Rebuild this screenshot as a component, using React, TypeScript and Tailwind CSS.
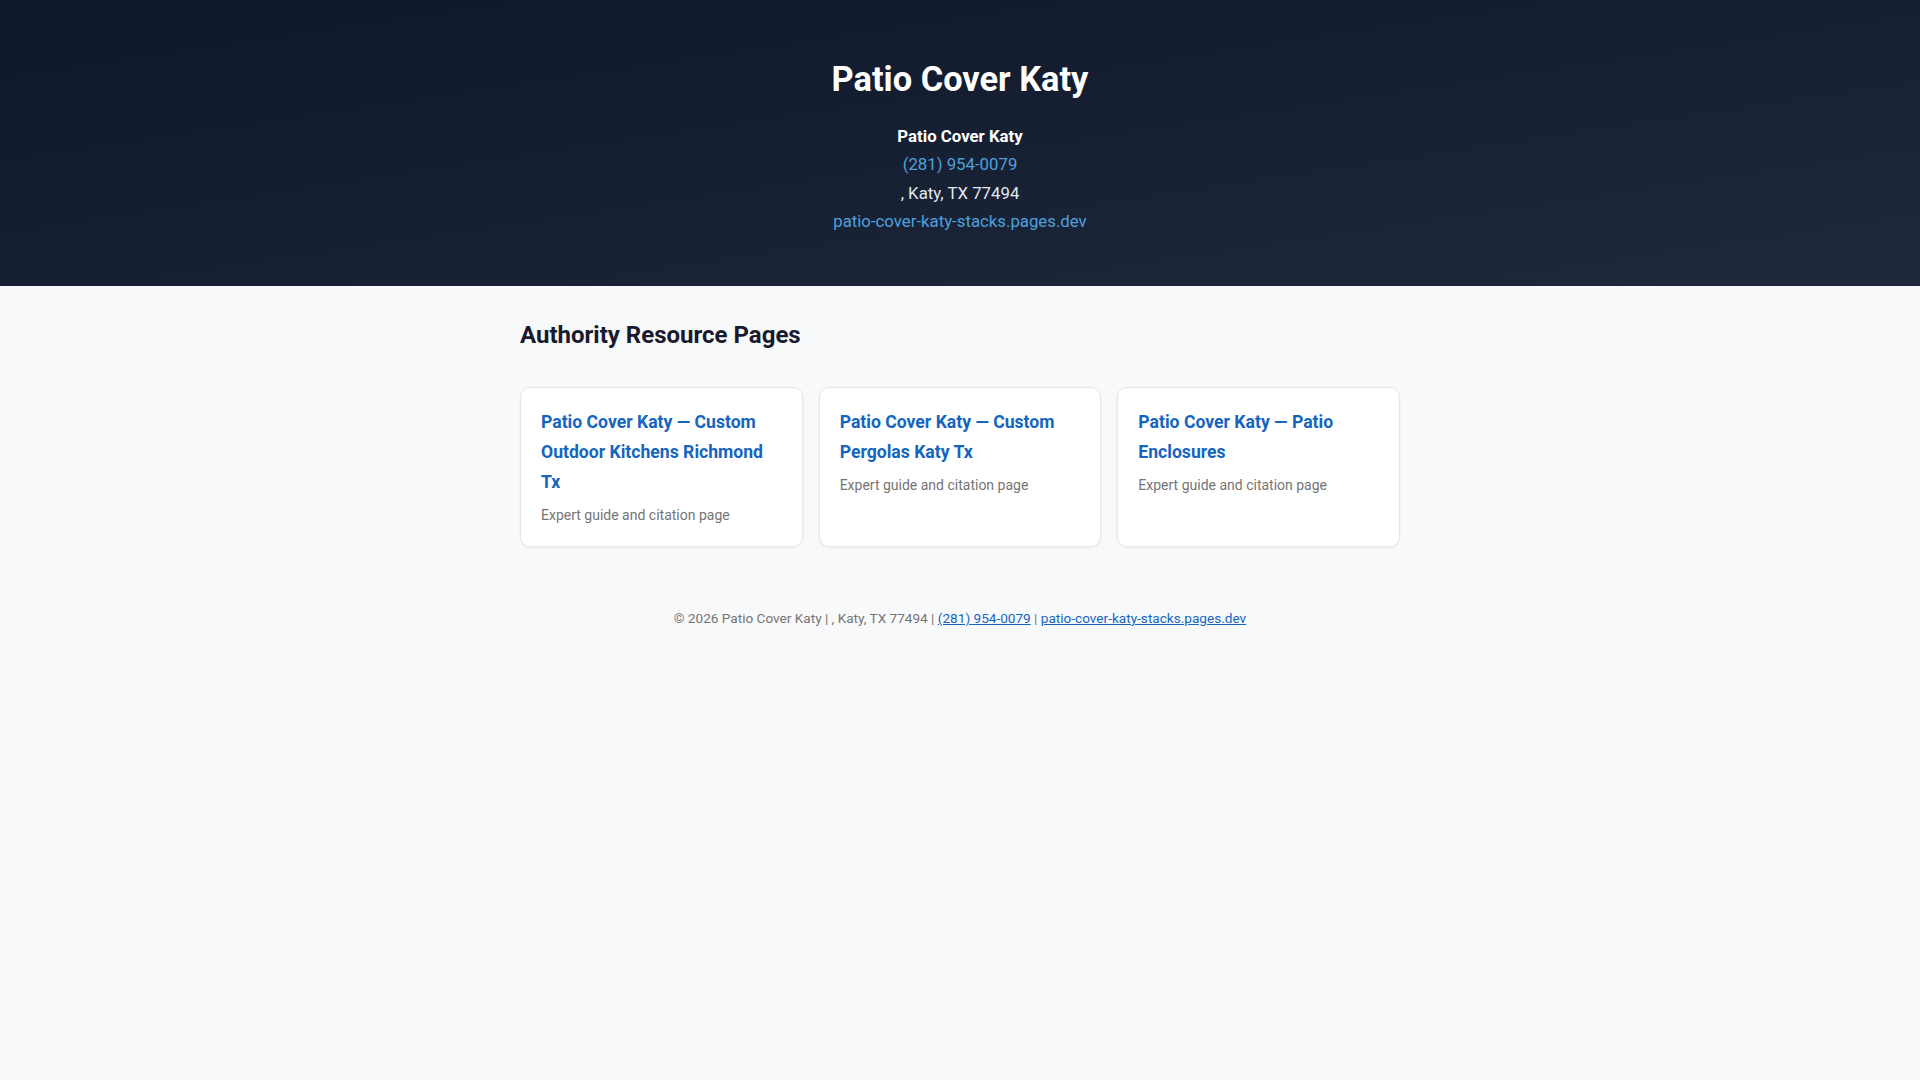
const resources = [
  { title: "Patio Cover Katy — Custom Outdoor Kitchens Richmond Tx", href: "#" },
  { title: "Patio Cover Katy — Custom Pergolas Katy Tx", href: "#" },
  { title: "Patio Cover Katy — Patio Enclosures", href: "#" },
];

export default function App() {
  return (
    <div className="min-h-screen bg-[#f8f9fa] font-['Roboto',sans-serif] text-[#1a1a2e]">
      {/* HEADER */}
      <header className="bg-gradient-to-br from-[#0f172a] to-[#1e293b] pt-[51px] pb-[50px] text-center text-[#e2e8f0]">
        <h1 className="text-[34.4px] leading-[56px] font-bold text-white">
          Patio Cover Katy
        </h1>
        <div className="mt-[15px] text-[16.8px] leading-[28.4px]">
          <div className="font-bold text-white">Patio Cover Katy</div>
          <div>
            <a href="tel:2819540079" className="text-[#4da0de]">
              (281) 954-0079
            </a>
          </div>
          <div>, Katy, TX 77494</div>
          <div>
            <a href="#" className="text-[#4da0de]">
              patio-cover-katy-stacks.pages.dev
            </a>
          </div>
        </div>
      </header>

      {/* RESOURCES */}
      <main className="mx-auto w-[880px] pt-[31px]">
        <h2 className="text-[24px] leading-[36px] font-bold text-[#1a1a2e]">
          Authority Resource Pages
        </h2>

        <div className="mt-[34px] grid grid-cols-3 gap-4">
          {resources.map((item) => (
            <div
              key={item.title}
              className="rounded-[10px] border border-[#e5e7eb] bg-white px-5 pt-[19px] pb-5 shadow-[0_1px_3px_rgba(0,0,0,0.06)]"
            >
              <a
                href={item.href}
                className="block text-[17.6px] leading-[30px] font-bold text-[#1565c0]"
              >
                {item.title}
              </a>
              <p className="mt-[7px] text-sm leading-[22px] text-[#757575]">
                Expert guide and citation page
              </p>
            </div>
          ))}
        </div>
      </main>

      {/* FOOTER */}
      <footer className="mt-[61px] text-center text-[13.6px] leading-5 text-[#757575]">
        © 2026 Patio Cover Katy | , Katy, TX 77494 |{" "}
        <a href="tel:2819540079" className="text-[#1565c0] underline">
          (281) 954-0079
        </a>{" "}
        |{" "}
        <a href="#" className="text-[#1565c0] underline">
          patio-cover-katy-stacks.pages.dev
        </a>
      </footer>
    </div>
  );
}
